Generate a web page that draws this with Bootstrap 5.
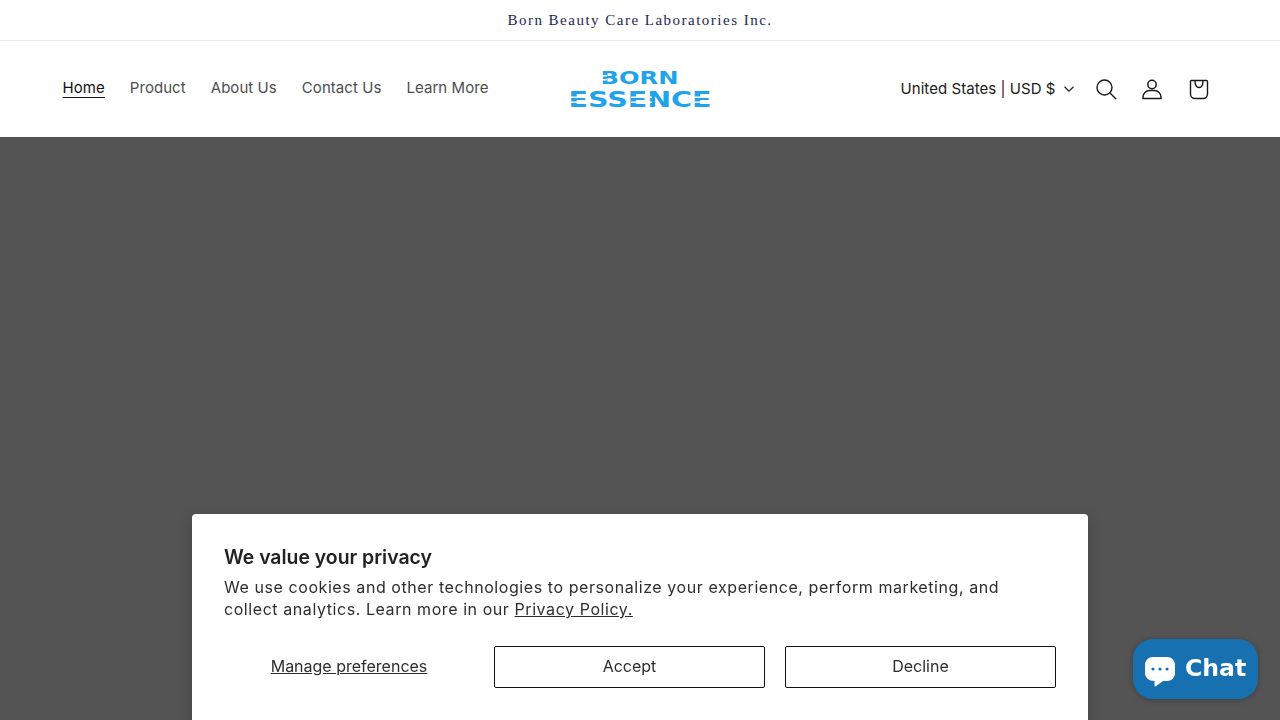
<!DOCTYPE html>
<html lang="en">
<head>
    <meta charset="UTF-8">
    <meta name="viewport" content="width=device-width, initial-scale=1.0">
    <title>Born Essence</title>
    <link href="https://cdn.jsdelivr.net/npm/bootstrap@5.3.0/dist/css/bootstrap.min.css" rel="stylesheet">
    <style>
        html, body { height: 720px; overflow: hidden; }
        body { font-family: "Inter", "Liberation Sans", sans-serif; background: #545454; }
        .announce {
            height: 41px;
            border-bottom: 1px solid #e9e9e9;
            font-family: "Liberation Serif", serif;
            font-size: 15px;
            letter-spacing: 1.49px;
            color: #23284f;
        }
        .site-head { height: 96px; padding: 0 50px; }
        .head-side { flex: 1 1 0; }
        .menu-side { padding-bottom: 2px; }
        .menu-link {
            font-size: 15px;
            letter-spacing: .06px;
            color: #4d4d4d;
            text-decoration: none;
            padding: 0 12.5px;
        }
        .menu-link.active-link { color: #111; text-decoration: underline; text-decoration-thickness: 1px; text-underline-offset: 4px; }
        .locale { font-size: 15px; letter-spacing: .05px; color: #1a1a1a; margin-right: 9px; }
        .head-icon { width: 46.5px; height: 46px; }
        .head-icon:last-child { margin-right: 8px; }
        .cookie-box {
            position: fixed;
            left: 192px;
            top: 514px;
            width: 896px;
            height: 240px;
            padding: 32px;
            background: #fff;
            border-radius: 4px;
            box-shadow: 0 4px 16px rgba(0,0,0,.2);
            color: #2d2d2d;
        }
        .cookie-title { font-size: 19.4px; font-weight: 600; line-height: 22px; margin-bottom: 8px; color: #222; }
        .cookie-text { font-size: 16px; line-height: 22px; letter-spacing: .57px; margin-bottom: 26px; }
        .cookie-text a, .pref-link { color: #2d2d2d; text-decoration: underline; }
        .pref-link { width: 250px; font-size: 16px; text-align: center; padding-bottom: 2px; }
        .cookie-btns { gap: 20px; }
        .cookie-btn {
            width: 271px;
            height: 42px;
            padding-bottom: 3px;
            border: 1px solid #111;
            border-radius: 2px;
            background: #fff;
            font-size: 16px;
            color: #2d2d2d;
        }
        .chat-btn {
            position: fixed;
            left: 1133px;
            top: 639px;
            width: 125px;
            height: 60px;
            padding-left: 12px;
            gap: 10px;
            border-radius: 20px;
            background: #1770b0;
            box-shadow: 0 1px 6px rgba(0,0,0,.25);
            color: #fff;
            font-family: "DejaVu Sans", sans-serif;
            font-weight: 700;
            font-size: 23.6px;
        }
        .chat-glyph { margin-top: 5px; }
    </style>
</head>
<body>

<div class="bg-white">
    <!-- Announcement -->
    <div class="announce d-flex align-items-center justify-content-center">Born Beauty Care Laboratories Inc.</div>

    <!-- Header -->
    <header class="site-head d-flex align-items-center">
        <nav class="head-side menu-side d-flex align-items-center">
            <a class="menu-link active-link" href="#">Home</a>
            <a class="menu-link" href="#">Product</a>
            <a class="menu-link" href="#">About Us</a>
            <a class="menu-link" href="#">Contact Us</a>
            <a class="menu-link" href="#">Learn More</a>
        </nav>
        <a href="#" class="d-block">
            <svg width="140" height="44" viewBox="0 -3 140 44" class="d-block">
                <g fill="#1fa3ea" font-family="DejaVu Sans, sans-serif" font-weight="700">
                    <text x="30.500" y="14" font-size="18" textLength="78" lengthAdjust="spacingAndGlyphs">BORN</text>
                    <text x="-1.500" y="37" font-size="20.500" textLength="143" lengthAdjust="spacingAndGlyphs">ESSENCE</text>
                </g>
                <!-- white slits that turn the E and B stems into bars -->
                <g fill="#fff">
                    <rect x="31" y="5" width="6" height="1.500"/>
                    <rect x="31" y="9" width="6" height="1.500"/>
                    <rect x="0" y="26.500" width="21" height="1.500"/>
                    <rect x="0" y="31.500" width="21" height="1.500"/>
                    <rect x="61" y="26.500" width="21" height="1.500"/>
                    <rect x="61" y="31.500" width="21" height="1.500"/>
                    <rect x="121" y="26.500" width="20" height="1.500"/>
                    <rect x="121" y="31.500" width="20" height="1.500"/>
                </g>
            </svg>
        </a>
        <div class="head-side d-flex align-items-center justify-content-end">
            <span class="locale d-flex align-items-center gap-2">United States | USD $
                <svg width="10" height="6" viewBox="0 0 10 6" fill="none" stroke="#222" stroke-width="1.200"><path d="M.5.800l4.500 4.300L9.500.800"/></svg>
            </span>
            <span class="head-icon d-flex align-items-center justify-content-center">
                <svg width="22" height="22" viewBox="0 0 22 22" fill="none" stroke="#1a1a1a" stroke-width="1.400"><circle cx="9.500" cy="9.500" r="7.500"/><path d="M15 15l6 6"/></svg>
            </span>
            <span class="head-icon d-flex align-items-center justify-content-center">
                <svg width="22" height="22" viewBox="0 0 22 22" fill="none" stroke="#1a1a1a" stroke-width="1.500"><circle cx="11" cy="6.500" r="4.200"/><path d="M2 20.500v-1.500c0-3.500 3-6.500 6.500-6.500h5c3.500 0 6.500 3 6.500 6.500v1.500z"/></svg>
            </span>
            <span class="head-icon d-flex align-items-center justify-content-center">
                <svg width="22" height="22" viewBox="0 0 22 22" fill="none" stroke="#1a1a1a" stroke-width="1.400"><path d="M2.500 3.500c0-.6.4-1 1-1h15c.6 0 1 .4 1 1V16c0 2.500-2 4.500-4.500 4.500H7C4.500 20.500 2.500 18.500 2.500 16z"/><path d="M7 2.700c0 4 1.500 6.800 4 6.800s4-2.800 4-6.800"/></svg>
            </span>
        </div>
    </header>
</div>

<!-- Cookie banner -->
<div class="cookie-box">
    <div class="cookie-title">We value your privacy</div>
    <p class="cookie-text">We use cookies and other technologies to personalize your experience, perform marketing, and collect analytics. Learn more in our <a href="#">Privacy Policy.</a></p>
    <div class="cookie-btns d-flex align-items-center">
        <a href="#" class="pref-link">Manage preferences</a>
        <button class="cookie-btn">Accept</button>
        <button class="cookie-btn">Decline</button>
    </div>
</div>

<!-- Chat launcher -->
<div class="chat-btn d-flex align-items-center">
    <svg class="chat-glyph" width="30" height="30" viewBox="0 0 30 30"><path fill="#fff" d="M8 0h14c4.500 0 8 3.500 8 8v8c0 4.500-3.500 8-8 8h-4l-7.500 5.500c-.5.300-1 0-1-.5V24C4 24 0 20.500 0 16V8c0-4.500 3.500-8 8-8z"/><g fill="#1770b0"><circle cx="8" cy="12" r="1.600"/><circle cx="15" cy="12" r="1.600"/><circle cx="22" cy="12" r="1.600"/></g></svg>
    <span>Chat</span>
</div>

<script src="https://cdn.jsdelivr.net/npm/bootstrap@5.3.0/dist/js/bootstrap.bundle.min.js"></script>
</body>
</html>
